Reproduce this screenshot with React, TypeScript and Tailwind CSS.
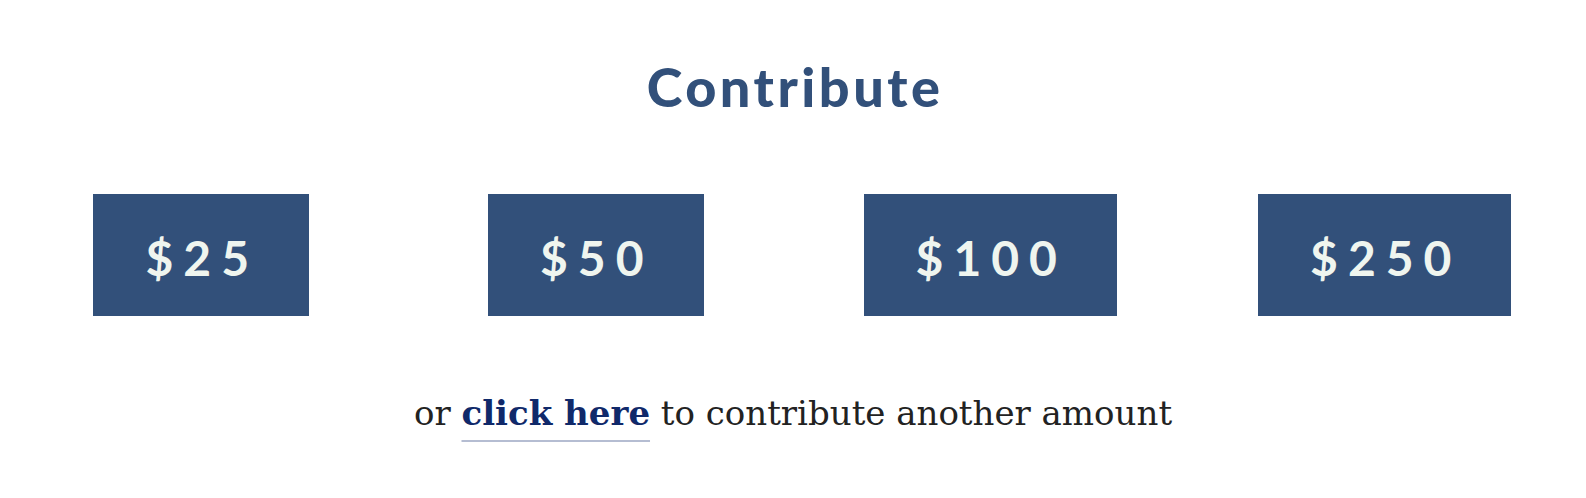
import React from "react";

const amounts = ["$25", "$50", "$100", "$250"];

export default function App() {
  return (
    <div className="w-full min-h-[498px] bg-white flex flex-col items-center">
      {/* Heading */}
      <h2 className="pt-[60px] pl-[4px] text-[54px] leading-none font-black text-[#32507a] font-['Lato',sans-serif] tracking-[3.5px]">
        Contribute
      </h2>

      {/* Amount buttons */}
      <div className="w-full grid grid-cols-4 px-1 mt-[80px]">
        {amounts.map((amt) => (
          <div key={amt} className="flex justify-center">
            <a
              href="#"
              className="h-[122px] flex items-center pt-[6px] pl-[52px] pr-[50px] bg-[#32507a] text-[#eff5ef] font-['Lato',sans-serif] font-bold text-[48px] leading-none tracking-[10px]"
            >
              {amt}
            </a>
          </div>
        ))}
      </div>

      {/* Other amount */}
      <p className="mt-[80px] text-[34px] leading-none text-[#222222] font-['DejaVu_Serif',serif]">
        or{" "}
        <a
          href="#"
          className="font-bold text-[#10296a] underline decoration-2 decoration-[#b5bdd2] underline-offset-[15px]"
        >
          click here
        </a>{" "}
        to contribute another amount
      </p>
    </div>
  );
}
